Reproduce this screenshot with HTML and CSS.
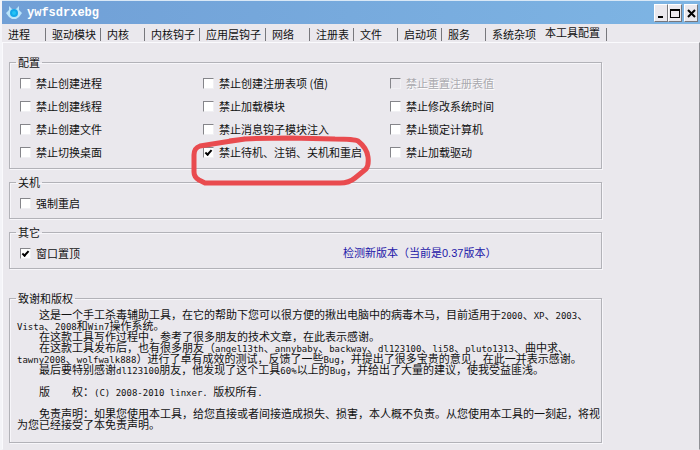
FILE: index.html
```html
<!DOCTYPE html>
<html lang="zh-CN">
<head>
<meta charset="utf-8">
<title>ywfsdrxebg</title>
<link rel="stylesheet" href="styles.css">
</head>
<body>
<div class="window">
  <header class="titlebar">
    <svg class="logo" viewBox="0 0 16 16" aria-hidden="true">
      <path d="M3 1l3 3h4l3-3v4l3 3-3 4-3 2H6l-3-2-3-4 3-3z" fill="#b9e4fa"/>
      <circle cx="8" cy="8" r="4" fill="#12a7ea"/>
      <circle cx="8" cy="8" r="2" fill="#22c3f5"/>
    </svg>
    <h1 class="title">ywfsdrxebg</h1>
    <div class="controls">
      <button class="control" aria-label="最小化"><svg viewBox="0 0 12 12"><path d="M3 9h5v2H3z"/></svg></button>
      <button class="control" aria-label="最大化"><svg viewBox="0 0 12 12"><path d="M1 2h10v9H1zM2 4v6h8V4z" fill-rule="evenodd"/></svg></button>
      <button class="control control-close" aria-label="关闭"><svg viewBox="0 0 12 12"><path d="M3 3l7 7M10 3l-7 7" stroke="#000" stroke-width="2"/></svg></button>
    </div>
  </header>
  <nav class="tabs">
    <button class="tab">进程</button>
    <button class="tab">驱动模块</button>
    <button class="tab">内核</button>
    <button class="tab">内核钩子</button>
    <button class="tab">应用层钩子</button>
    <button class="tab">网络</button>
    <button class="tab">注册表</button>
    <button class="tab">文件</button>
    <button class="tab">启动项</button>
    <button class="tab">服务</button>
    <button class="tab tab-last">系统杂项</button>
    <button class="tab tab-active">本工具配置</button>
  </nav>
  <main class="page">
    <fieldset class="group">
      <legend>配置</legend>
      <div class="options">
        <label class="option"><input type="checkbox">禁止创建进程</label>
        <label class="option"><input type="checkbox">禁止创建注册表项 (值)</label>
        <label class="option option-disabled"><input type="checkbox" disabled>禁止重置注册表值</label>
        <label class="option"><input type="checkbox">禁止创建线程</label>
        <label class="option"><input type="checkbox">禁止加载模块</label>
        <label class="option"><input type="checkbox">禁止修改系统时间</label>
        <label class="option"><input type="checkbox">禁止创建文件</label>
        <label class="option"><input type="checkbox">禁止消息钩子模块注入</label>
        <label class="option"><input type="checkbox">禁止锁定计算机</label>
        <label class="option"><input type="checkbox">禁止切换桌面</label>
        <label class="option"><input type="checkbox" checked>禁止待机、注销、关机和重启
          <svg class="marker" viewBox="0 0 190 62" aria-hidden="true"><path d="M60 9L40 12L15 16Q9 18 9 25L9 42Q9 47 14 50L20 53L155 53Q164 53 170 48L181 39Q184 35 183 27Q182 18 173 11Q169 9 150 9L105 8Q80 8 60 9L44 11"/></svg>
        </label>
        <label class="option"><input type="checkbox">禁止加载驱动</label>
      </div>
    </fieldset>
    <fieldset class="group">
      <legend>关机</legend>
      <div class="line"><label class="option"><input type="checkbox">强制重启</label></div>
    </fieldset>
    <fieldset class="group">
      <legend>其它</legend>
      <div class="line">
        <label class="option"><input type="checkbox" checked>窗口置顶</label>
        <a class="update" href="#">检测新版本（当前是0.37版本）</a>
      </div>
    </fieldset>
    <fieldset class="group group-about">
      <legend>致谢和版权</legend>
      <div class="about">
        <p>这是一个手工杀毒辅助工具，在它的帮助下您可以很方便的揪出电脑中的病毒木马，目前适用于<span>2000</span>、<span>XP</span>、<span>2003</span>、<br><span>Vista</span>、<span>2008</span>和<span>Win7</span>操作系统。</p>
        <p>在这款工具写作过程中，参考了很多朋友的技术文章，在此表示感谢。</p>
        <p>在这款工具发布后，也有很多朋友（<span>angel13th</span>、<span>annybaby</span>、<span>backway</span>、<span>dl123100</span>、<span>li58</span>、<span>pluto1313</span>、曲中求、<br><span>tawny2008</span>、<span>wolfwalk888</span>）进行了卓有成效的测试，反馈了一些<span>Bug</span>，并提出了很多宝贵的意见，在此一并表示感谢。</p>
        <p>最后要特别感谢<span>dl123100</span>朋友，他发现了这个工具<span>60%</span>以上的<span>Bug</span>，并给出了大量的建议，使我受益匪浅。</p>
        <p class="spaced">版　　权：<span>(C) 2008-2010 linxer. </span>版权所有<span>.</span></p>
        <p class="spaced">免责声明：如果您使用本工具，给您直接或者间接造成损失、损害，本人概不负责。从您使用本工具的一刻起，将视<br>为您已经接受了本免责声明。</p>
      </div>
    </fieldset>
  </main>
</div>
</body>
</html>
```
FILE: styles.css
```css
* {
  box-sizing: border-box;
}

body {
  margin: 0;
  background: #eae8ed;
  color: #111;
  font: 11px/11px "Noto Sans CJK SC", sans-serif;
}

button {
  font: inherit;
  color: inherit;
}

.window {
  display: flex;
  flex-direction: column;
  min-height: 100vh;
  border-left: 2px solid #f4f4f8;
}

.titlebar {
  display: flex;
  align-items: center;
  height: 24px;
  padding: 0 2px 0 4px;
  border-top: 1px solid #d9e8f6;
  background: linear-gradient(90deg, #709fd6, #7eb5e4);
}

.logo {
  width: 16px;
  height: 16px;
}

.title {
  flex: 1;
  margin: 0 0 0 5px;
  color: #fff;
  font: bold 12px/16px "Liberation Mono", monospace;
}

.controls {
  display: flex;
}

.control {
  width: 14px;
  height: 18px;
  padding: 0;
  border: 1px solid;
  border-color: #fff #77777c #77777c #fff;
  background: #eae8ed;
}

.control-close {
  margin-left: 2px;
}

.control svg {
  display: block;
  width: 12px;
  height: 12px;
}

.tabs {
  display: flex;
  height: 18px;
}

.tab {
  position: relative;
  min-width: 44px;
  padding: 2px 5px 0 6px;
  border: 0;
  background: none;
  text-align: left;
  white-space: nowrap;
}

.tab::after {
  content: "";
  position: absolute;
  top: 4px;
  right: 0;
  width: 1px;
  height: 13px;
  background: #77777c;
}

.tab-last {
  padding-right: 3px;
}

.tab-last::after {
  content: none;
}

.tab-active {
  padding: 0 7px 2px 6px;
}

.page {
  flex: 1;
  padding: 14px 97px 0 6px;
  border: 1px solid;
  border-color: #fafafd #909095 transparent #fafafd;
}

.group {
  min-width: 0;
  margin: 0 0 8px;
  padding: 0 10px;
  border: 1px solid #b2b2b8;
  box-shadow: 1px 1px #f7f6fa, inset 1px 1px #f7f6fa;
}

.group legend {
  margin-left: -4px;
  padding: 0 2px;
}

.options {
  display: grid;
  grid-template-columns: 183px 187px 1fr;
  grid-auto-rows: 23px;
  padding: 4px 0;
}

.option {
  position: relative;
  display: flex;
  align-items: center;
  gap: 5px;
  white-space: nowrap;
}

.option-disabled {
  color: #a9a9ae;
  text-shadow: 1px 1px #fff;
}

.option input {
  appearance: none;
  width: 11px;
  height: 11px;
  margin: 0;
  border: 1px solid;
  border-color: #85858a #f0f0f3 #f0f0f3 #85858a;
  background: #fff;
}

.option input:disabled {
  background: #eae8ed;
}

.option input:checked::after {
  content: "";
  display: block;
  width: 5px;
  height: 2px;
  margin: 2px 1px;
  border: solid #000;
  border-width: 0 0 2px 2px;
  transform: rotate(-48deg);
}

.marker {
  position: absolute;
  top: -11px;
  left: -18px;
  width: 190px;
  height: 62px;
  fill: none;
  stroke: #e94b4f;
  stroke-width: 5;
  stroke-linejoin: round;
  pointer-events: none;
}

.line {
  display: grid;
  grid-template-columns: 323px 1fr;
  align-items: center;
  height: 30px;
}

.update {
  color: #1c16a8;
  font-family: "Liberation Sans", "Noto Sans CJK SC", sans-serif;
  text-decoration: none;
  white-space: nowrap;
}

.group-about {
  margin: 24px 0 0;
}

.about {
  padding: 5px 0 12px;
  margin: 0 -3px;
  white-space: nowrap;
}

.about p {
  margin: 0;
  text-indent: 22px;
}

.about .spaced {
  margin-top: 11px;
}

.about span {
  font: 9px/1px "DejaVu Sans Mono", monospace;
}
```
